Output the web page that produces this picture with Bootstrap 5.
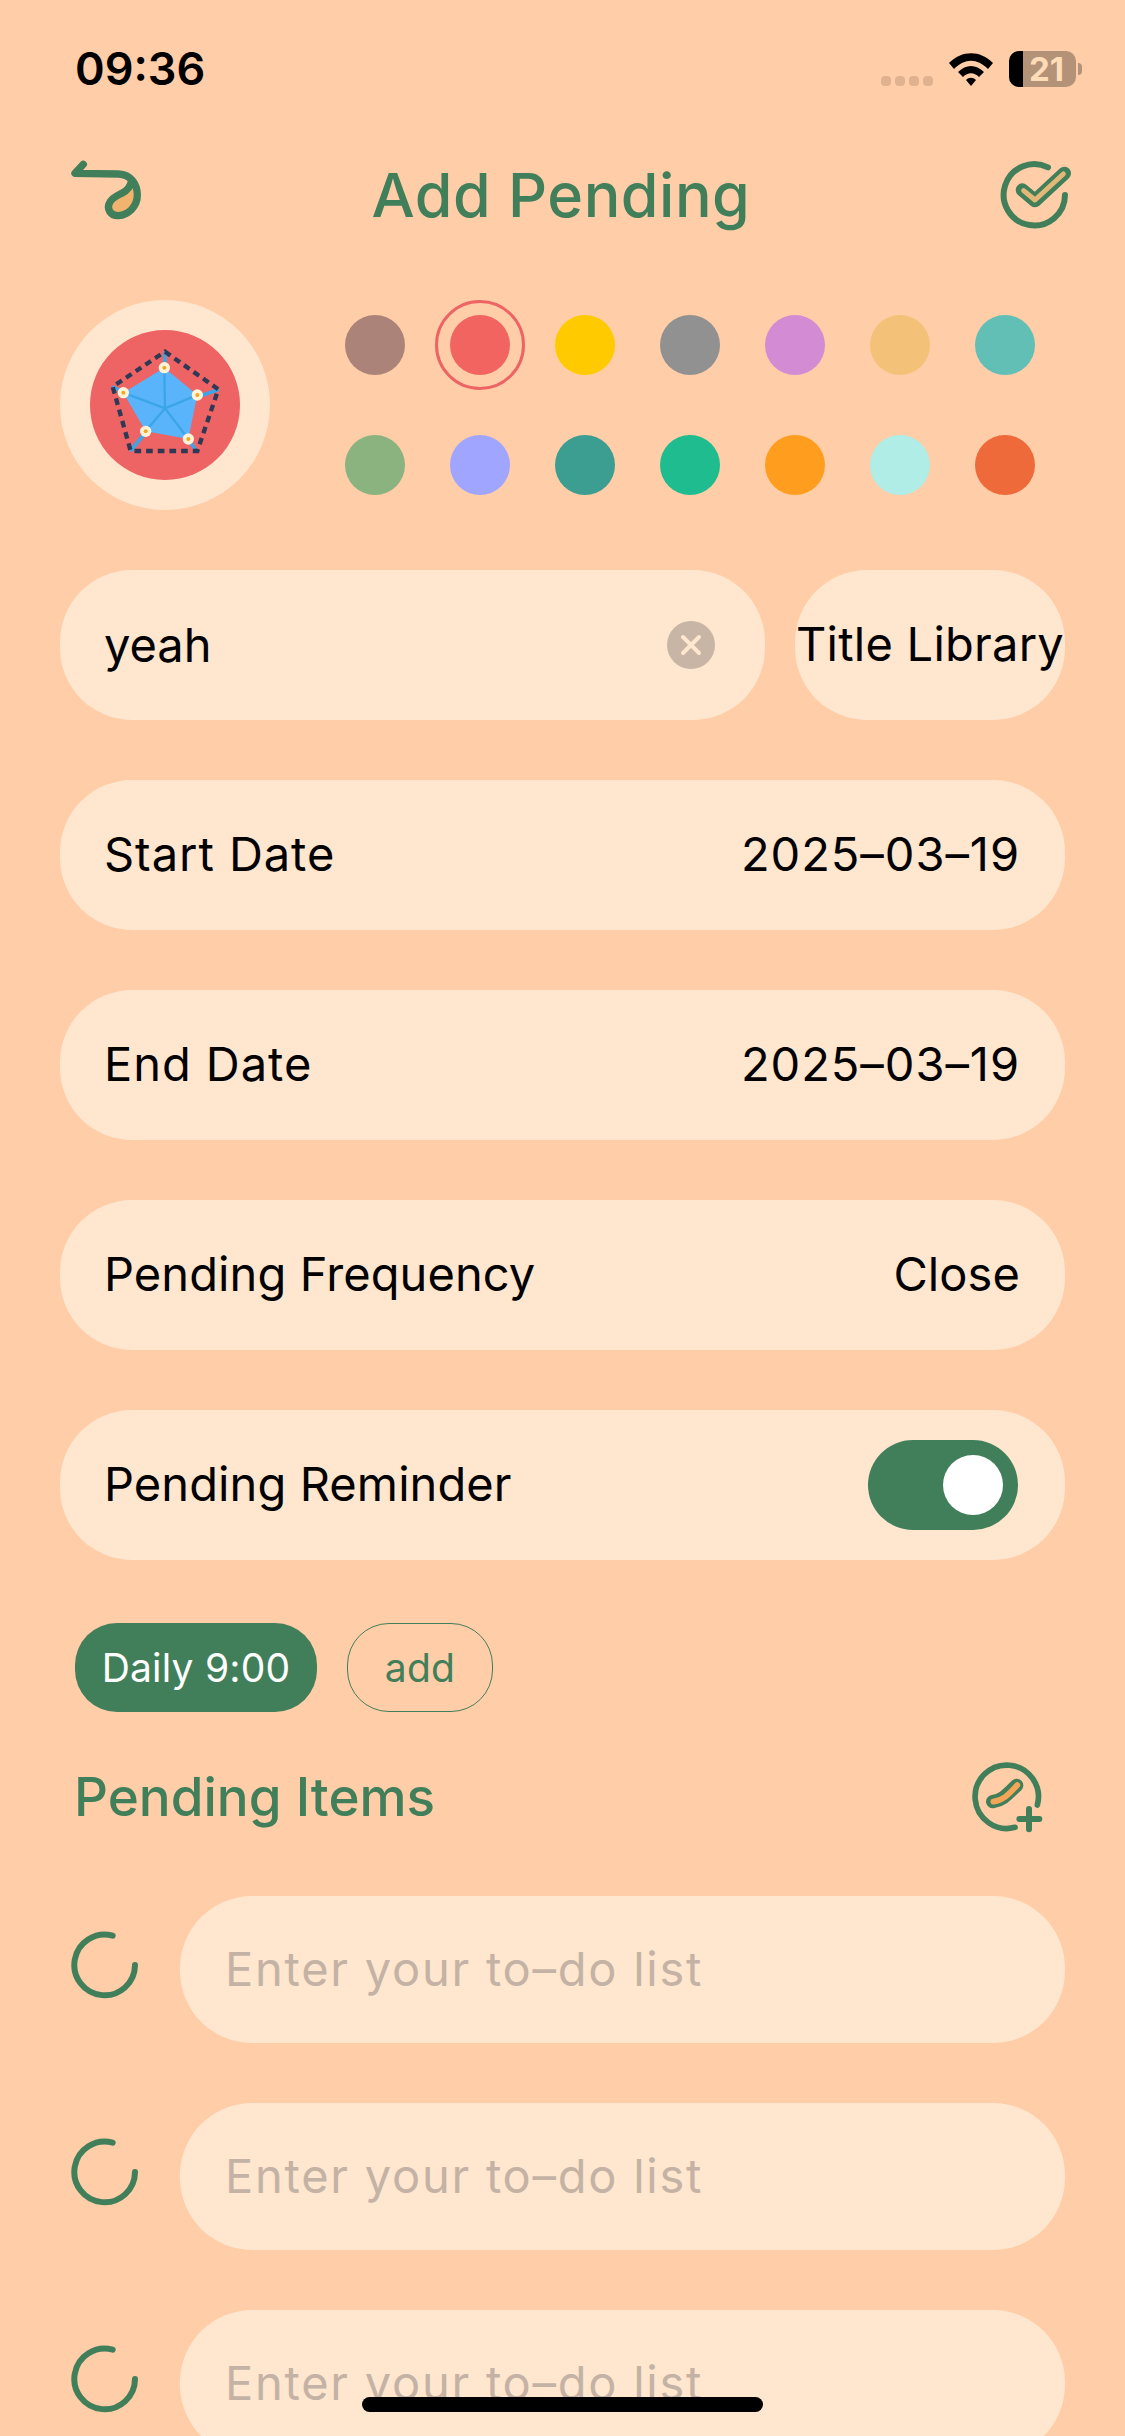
<!DOCTYPE html>
<html lang="en">
<head>
<meta charset="utf-8">
<title>Add Pending</title>
<link href="https://cdn.jsdelivr.net/npm/bootstrap@5.3.0/dist/css/bootstrap.min.css" rel="stylesheet">
<style>
html,body{height:2436px;overflow:hidden;}
body{background:#FFCDA8;font-family:"Inter","Liberation Sans",sans-serif;color:#000;width:1125px;font-size:47px;}
.status-row{height:100px;padding:44px 43px 0 75px;}
.clock{font-size:45px;font-weight:600;line-height:50px;}
.sig-dots{gap:4px;margin:32px 15px 0 0;}
.sig-dots i{display:block;width:10px;height:10px;border-radius:4px;background:#E0B28F;}
.wifi-ico{margin-top:8px;}
.batt{position:relative;width:67px;height:36px;border-radius:10px;background:#B39278;margin:7px 0 0 15px;color:#FFDCB8;font-size:33px;font-weight:700;line-height:36px;text-align:center;padding-left:8px;}
.batt-fill{position:absolute;left:0;top:0;bottom:0;width:14px;background:#000;border-radius:10px 0 0 10px;}
.batt-nub{width:4px;height:12px;background:#B39278;border-radius:0 4px 4px 0;margin:19px 0 0 2px;}
.nav-row{margin-top:30px;padding:0 35px 0 50px;height:120px;}
.nav-title{color:#417F5A;font-size:61px;font-weight:500;line-height:72px;letter-spacing:.5px;padding:29px 18px 0 0;}
.check-ico{margin-top:10px;}
.ico-line{fill:none;stroke:#417F5A;stroke-linecap:round;stroke-linejoin:round;}
.main-col{padding:0 60px;}
.pick-row{margin-top:50px;}
.avatar-disc{width:210px;height:210px;background:#FFE6CE;}
.avatar-core{width:150px;height:150px;background:#EE6363;}
.swatch-grid{display:grid;grid-template-columns:repeat(7,90px);grid-auto-rows:90px;column-gap:15px;row-gap:30px;margin-left:60px;}
.swatch{width:60px;height:60px;}
.swatch-on{outline:3px solid #EE6363;outline-offset:12px;}
.pill-row{height:150px;border-radius:72px;background:#FFE6CE;font-weight:380;margin-top:60px;padding:0 45px 3px 44px;line-height:1;white-space:nowrap;letter-spacing:.1px;}
.wide-text{letter-spacing:.95px;}
.pill-field{flex:0 0 705px;padding:0 50px 0 44px;}
.lib-pill{flex:0 0 270px;padding:0 0 3px;margin-left:30px;letter-spacing:.25px;}
.pill-input.form-control{background:transparent;border:0;box-shadow:none;padding:0;font-size:47px;font-weight:380;color:#000;border-radius:0;font-family:inherit;line-height:1.2;}
.pill-input.form-control::placeholder{color:#C4B3A5;opacity:1;letter-spacing:1.75px;}
.clear-btn{width:48px;height:48px;background:#C8B5A6;flex:none;}
.rem-switch-wrap{padding:3px 0 0;margin:0 2px 0 0;min-height:0;}
.form-switch .form-check-input.rem-switch{width:150px;height:90px;margin:0;border:0;border-radius:45px;background-color:#417F5A;background-position:center;background-size:100% 100%;background-image:url("data:image/svg+xml,%3csvg xmlns='http://www.w3.org/2000/svg' viewBox='0 0 150 90'%3e%3ccircle cx='105' cy='45' r='30' fill='%23fff'/%3e%3c/svg%3e");box-shadow:none;float:none;}
.chip-row{margin-top:63px;gap:30px;padding-left:15px;}
.time-chip{height:89px;border-radius:42px;font-size:39px;line-height:1;font-weight:380;letter-spacing:.2px;}
.chip-on{width:242px;background:#417F5A;color:#fff;}
.chip-off{width:146px;border:1.5px solid #417F5A;color:#417F5A;}
.items-head{height:110px;margin-top:38px;padding-left:14px;margin-right:-5px;}
.items-title{color:#417F5A;font-size:53px;font-weight:460;line-height:1;margin-bottom:16px;}
.item-row{margin-top:36px;}
.item-row + .item-row{margin-top:60px;}
.item-ring{margin-left:-10px;flex:none;}
.item-pill{flex:0 0 885px;height:147px;margin:0 0 0 20px;padding:0 45px;}
.home-bar{position:fixed;left:362px;top:2397px;width:401px;height:15px;background:#000;border-radius:8px;}
</style>
</head>
<body>
<div class="status-row d-flex">
  <div class="clock flex-grow-1">09:36</div>
  <div class="d-flex sig-dots"><i></i><i></i><i></i><i></i></div>
  <svg width="46" height="34" viewBox="0 0 46 34" class="wifi-ico"><path d="M1 11 C14 -2 32 -2 45 11 L40 17 C29 6 17 6 6 17Z M10 20 C18 12 28 12 36 20 L31 25 C26 20 20 20 15 25Z M18 28 C21 25 25 25 28 28 L23 34Z" fill="#000"/></svg>
  <div class="batt"><span class="batt-fill"></span>21</div>
  <div class="batt-nub"></div>
</div>

<div class="nav-row d-flex">
  <svg width="110" height="110" viewBox="0 0 330 330" class="flex-none">
    <path d="M245 150 C262 170 262 185 262 195 C262 230 235 255 205 257 C180 258 170 235 178 220 C182 205 205 195 215 190 C232 182 242 170 245 150Z" fill="#F2B36F"/>
    <path class="ico-line" stroke-width="22" d="M100 103 L75 130 L205 132 C245 134 262 165 262 195 C262 230 235 255 205 257 C180 258 170 235 178 220 C182 205 205 195 215 190 C232 182 242 170 245 150"/>
  </svg>
  <div class="nav-title flex-grow-1 text-center">Add Pending</div>
  <svg width="110" height="110" viewBox="0 0 330 330" class="check-ico">
    <path class="ico-line" stroke-width="18" d="M204 82 A92 92 0 1 0 255 165"/>
    <path class="ico-line" stroke-width="40" d="M127 150 L165 182 L253 100"/>
    <path fill="none" stroke="#E3B877" stroke-width="15" stroke-linecap="round" stroke-linejoin="round" d="M131 152 L165 180 L250 102"/>
  </svg>
</div>

<div class="main-col">
  <div class="pick-row d-flex align-items-start">
    <div class="avatar-disc rounded-circle d-flex align-items-center justify-content-center flex-shrink-0">
      <div class="avatar-core rounded-circle">
        <svg width="150" height="150" viewBox="150 150 450 450">
          <g stroke="#3BA5E8" stroke-width="11" stroke-linecap="round"><path d="M375 385L375 218M375 385L532 330M375 385L468 510M375 385L274 510M375 385L220 322"/></g>
          <path d="M373 263L472 345L445 477L317 454L250 338Z" fill="#5AB4FB"/>
          <g stroke="#3BA5E8" stroke-width="7"><path d="M375 385L373 263M375 385L472 345M375 385L445 477M375 385L317 454M375 385L250 338"/></g>
          <path d="M375 215L535 328L472 513L272 513L218 320Z" fill="none" stroke="#2E3A55" stroke-width="13" stroke-dasharray="20 15"/>
          <g fill="#FFF3D8"><circle cx="373" cy="263" r="17"/><circle cx="472" cy="345" r="17"/><circle cx="445" cy="477" r="17"/><circle cx="317" cy="454" r="17"/><circle cx="250" cy="338" r="17"/></g>
          <g fill="#F5A623"><circle cx="373" cy="263" r="6"/><circle cx="472" cy="345" r="6"/><circle cx="445" cy="477" r="6"/><circle cx="317" cy="454" r="6"/><circle cx="250" cy="338" r="6"/></g>
        </svg>
      </div>
    </div>
    <div class="swatch-grid">
      <div class="d-flex align-items-center justify-content-center"><div class="swatch rounded-circle" style="background:#AC8378"></div></div>
      <div class="d-flex align-items-center justify-content-center"><div class="swatch swatch-on rounded-circle" style="background:#F1645F"></div></div>
      <div class="d-flex align-items-center justify-content-center"><div class="swatch rounded-circle" style="background:#FFCB00"></div></div>
      <div class="d-flex align-items-center justify-content-center"><div class="swatch rounded-circle" style="background:#919191"></div></div>
      <div class="d-flex align-items-center justify-content-center"><div class="swatch rounded-circle" style="background:#D38CD3"></div></div>
      <div class="d-flex align-items-center justify-content-center"><div class="swatch rounded-circle" style="background:#F3C177"></div></div>
      <div class="d-flex align-items-center justify-content-center"><div class="swatch rounded-circle" style="background:#62BFB6"></div></div>
      <div class="d-flex align-items-center justify-content-center"><div class="swatch rounded-circle" style="background:#8AB37F"></div></div>
      <div class="d-flex align-items-center justify-content-center"><div class="swatch rounded-circle" style="background:#A0A5FF"></div></div>
      <div class="d-flex align-items-center justify-content-center"><div class="swatch rounded-circle" style="background:#3B9E90"></div></div>
      <div class="d-flex align-items-center justify-content-center"><div class="swatch rounded-circle" style="background:#1FBC8F"></div></div>
      <div class="d-flex align-items-center justify-content-center"><div class="swatch rounded-circle" style="background:#FF9D1F"></div></div>
      <div class="d-flex align-items-center justify-content-center"><div class="swatch rounded-circle" style="background:#AFEDE6"></div></div>
      <div class="d-flex align-items-center justify-content-center"><div class="swatch rounded-circle" style="background:#EE6A3B"></div></div>
    </div>
  </div>

  <div class="d-flex">
    <div class="pill-row pill-field d-flex align-items-center">
      <input class="pill-input form-control" type="text" value="yeah">
      <span class="clear-btn rounded-circle d-flex align-items-center justify-content-center">
        <svg width="22" height="22" viewBox="0 0 22 22"><path d="M3 3L19 19M19 3L3 19" stroke="#FFE6CE" stroke-width="4" stroke-linecap="round"/></svg>
      </span>
    </div>
    <div class="pill-row lib-pill d-flex align-items-center justify-content-center">Title Library</div>
  </div>

  <div class="pill-row d-flex align-items-center justify-content-between"><span class="wide-text">Start Date</span><span class="wide-text">2025–03–19</span></div>
  <div class="pill-row d-flex align-items-center justify-content-between"><span class="wide-text">End Date</span><span class="wide-text">2025–03–19</span></div>
  <div class="pill-row d-flex align-items-center justify-content-between"><span>Pending Frequency</span><span>Close</span></div>
  <div class="pill-row d-flex align-items-center justify-content-between">
    <span>Pending Reminder</span>
    <div class="form-check form-switch rem-switch-wrap d-flex"><input class="form-check-input rem-switch" type="checkbox" role="switch" checked aria-label="Pending Reminder"></div>
  </div>

  <div class="chip-row d-flex">
    <div class="time-chip chip-on d-flex align-items-center justify-content-center">Daily 9:00</div>
    <div class="time-chip chip-off d-flex align-items-center justify-content-center">add</div>
  </div>

  <div class="items-head d-flex align-items-center justify-content-between">
    <div class="items-title">Pending Items</div>
    <svg width="110" height="110" viewBox="0 0 330 330">
      <path class="ico-line" stroke-width="17" d="M232 165 A95 95 0 1 0 165 232"/>
      <path class="ico-line" stroke-width="18" d="M178 207H238M207 177V238"/>
      <path class="ico-line" stroke-width="40" d="M98 155 C128 150 140 135 170 106"/>
      <path fill="none" stroke="#F4A557" stroke-width="17" stroke-linecap="round" d="M100 155 C130 150 145 135 172 105"/>
    </svg>
  </div>

  <div class="item-row d-flex align-items-center">
    <svg class="item-ring" width="110" height="110" viewBox="0 0 330 330"><path class="ico-line" stroke-width="18" d="M188 62 A91 91 0 1 0 255 150"/></svg>
    <div class="pill-row item-pill d-flex align-items-center"><input class="pill-input form-control" type="text" placeholder="Enter your to–do list"></div>
  </div>
  <div class="item-row d-flex align-items-center">
    <svg class="item-ring" width="110" height="110" viewBox="0 0 330 330"><path class="ico-line" stroke-width="18" d="M188 62 A91 91 0 1 0 255 150"/></svg>
    <div class="pill-row item-pill d-flex align-items-center"><input class="pill-input form-control" type="text" placeholder="Enter your to–do list"></div>
  </div>
  <div class="item-row d-flex align-items-center">
    <svg class="item-ring" width="110" height="110" viewBox="0 0 330 330"><path class="ico-line" stroke-width="18" d="M188 62 A91 91 0 1 0 255 150"/></svg>
    <div class="pill-row item-pill d-flex align-items-center"><input class="pill-input form-control" type="text" placeholder="Enter your to–do list"></div>
  </div>
</div>
<div class="home-bar"></div>
<script src="https://cdn.jsdelivr.net/npm/bootstrap@5.3.0/dist/js/bootstrap.bundle.min.js"></script>
</body>
</html>
